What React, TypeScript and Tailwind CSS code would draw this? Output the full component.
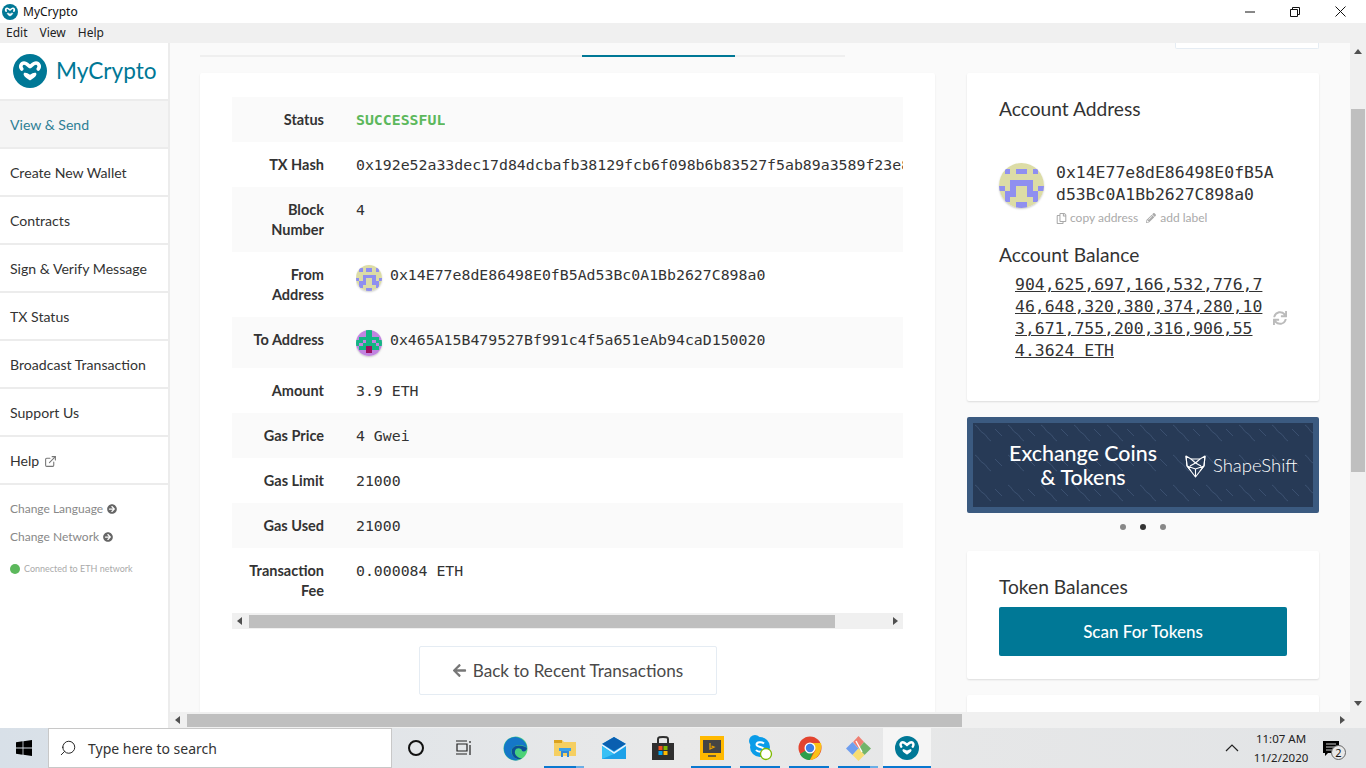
import { ExternalLink, Search } from "lucide-react";
import { FaArrowCircleRight, FaArrowLeft, FaPencilAlt, FaRegCopy, FaSync } from "react-icons/fa";

const lato = "font-['Lato','Noto_Sans',sans-serif]";
const mono = "font-['DejaVu_Sans_Mono',monospace]";

const navItems = ["Create New Wallet", "Contracts", "Sign & Verify Message", "TX Status", "Broadcast Transaction", "Support Us"];

function Logo({ size, className }: { size: number; className?: string }) {
  return (
    <svg width={size} height={size} viewBox="0 0 34 34" className={className}>
      <circle cx="17" cy="17" r="17" fill="#007896" />
      <path d="M8.8 15C6.5 12.5 8.5 9 11 9C13 9 15 11 17 12.6C19 11 21 9 23 9C25.5 9 27.5 12.5 25.2 15" fill="none" stroke="#fff" strokeWidth="3.6" strokeLinecap="round" strokeLinejoin="round" />
      <path d="M11.5 19.5C13.5 19 15.5 20.5 17 21.6C18.5 20.5 20.5 19 22.5 19.5C23.5 21 21 23 17 25.5C13 23 10.5 21 11.5 19.5Z" fill="#fff" stroke="#fff" strokeWidth="1.5" strokeLinejoin="round" />
    </svg>
  );
}

function Identicon({ size, bg, fg, spot, rows }: { size: number; bg: string; fg: string; spot?: string; rows: string[] }) {
  return (
    <svg width={size} height={size} viewBox="0 0 8 8" shapeRendering="crispEdges" className="shrink-0 rounded-full shadow-[0_1px_2px_rgba(0,0,0,0.2)]">
      <rect width="8" height="8" fill={bg} />
      {rows.map((row, y) =>
        row.split("").map((c, x) =>
          c === "." ? null : <rect key={`${x}-${y}`} x={x} y={y} width="1" height="1" fill={c === "#" ? fg : spot} />
        )
      )}
    </svg>
  );
}

const fromRows = ["........", ".#.##.#.", "........", "..####..", "#.#..#.#", ".##..##.", ".#....#.", "...##..."];
const toRows = ["...##...", "...##...", ".######.", "##.##.##", "#.####.#", ".##xx##.", "...xx...", "........"];

function Triangle({ dir, className }: { dir: "up" | "down" | "left" | "right"; className?: string }) {
  const points = { up: "4,1 8,6 0,6", down: "0,2 8,2 4,7", left: "6,0 6,8 1,4", right: "2,0 2,8 7,4" }[dir];
  return (
    <svg width="8" height="8" viewBox="0 0 8 8" className={className}>
      <polygon points={points} fill="#505050" />
    </svg>
  );
}

function Sidebar() {
  return (
    <aside className={`w-[170px] shrink-0 border-r-2 border-[#ececec] bg-white ${lato}`}>
      <div className="flex h-[58px] items-center border-b-2 border-[#ececec] pl-[13px]">
        <Logo size={34} />
        <span className="ml-[9px] text-[22.6px] leading-none text-[#007896]">MyCrypto</span>
      </div>
      <div className="flex h-[48px] items-center border-b-2 border-[#ececec] bg-[#f5f5f5] pl-[10px] pt-[2px] text-[14.1px] text-[#2f7f96]">View &amp; Send</div>
      {navItems.map((item) => (
        <div key={item} className="flex h-[48px] items-center border-b-2 border-[#ececec] pl-[10px] pt-[2px] text-[14.1px] text-[#333]">{item}</div>
      ))}
      <div className="flex h-[48px] items-center gap-[5px] border-b-2 border-[#ececec] pl-[10px] pt-[2px] text-[14.1px] text-[#333]">
        Help <ExternalLink size={13} className="text-[#777]" />
      </div>
      <div className="mt-[5px] flex h-[28px] items-center gap-[4px] pl-[10px] pt-[10px] text-[12px] text-[#888]">
        Change Language <FaArrowCircleRight size={10} className="text-[#666]" />
      </div>
      <div className="mt-[3px] flex h-[28px] items-center gap-[4px] pl-[10px] pt-[4px] text-[12px] text-[#888]">
        Change Network <FaArrowCircleRight size={10} className="text-[#666]" />
      </div>
      <div className="mt-[10px] flex h-[20px] items-center gap-[4px] pl-[10px] text-[9px] text-[#aaa]">
        <span className="h-[10px] w-[10px] rounded-full bg-[#5cb85c]" />
        Connected to ETH network
      </div>
    </aside>
  );
}

function Row({ label, h, gray, children }: { label: string; h: number; gray?: boolean; children: React.ReactNode }) {
  return (
    <div className={`flex w-[671px] ${gray ? "bg-[#fafafa]" : "bg-white"}`} style={{ height: h }}>
      <div className={`ml-[15px] w-[77px] shrink-0 pt-[13px] text-right text-[14.5px] font-bold leading-[20px] text-[#333] ${lato}`}>{label}</div>
      <div className={`ml-[32px] flex items-start gap-[8px] overflow-hidden whitespace-nowrap pt-[13px] text-[14.85px] leading-[20px] text-[#333] ${mono}`}>{children}</div>
    </div>
  );
}

function TxCard() {
  return (
    <section className="h-[700px] w-[735px] shrink-0 rounded-t-[2px] bg-white px-[32px] pt-[24px] shadow-[0_1px_2px_rgba(0,0,0,0.08)]">
      <Row label="Status" h={45} gray>
        <span className="font-bold text-[#5cb85c]">SUCCESSFUL</span>
      </Row>
      <Row label="TX Hash" h={45}>0x192e52a33dec17d84dcbafb38129fcb6f098b6b83527f5ab89a3589f23e8a21c4</Row>
      <Row label="Block Number" h={65} gray>4</Row>
      <Row label="From Address" h={65}>
        <Identicon size={26} bg="#dcdca6" fg="#8f8ff0" rows={fromRows} />
        0x14E77e8dE86498E0fB5Ad53Bc0A1Bb2627C898a0
      </Row>
      <Row label="To Address" h={51} gray>
        <Identicon size={26} bg="#c184e0" fg="#12b683" spot="#9c1060" rows={toRows} />
        0x465A15B479527Bf991c4f5a651eAb94caD150020
      </Row>
      <Row label="Amount" h={45}>3.9 ETH</Row>
      <Row label="Gas Price" h={45} gray>4 Gwei</Row>
      <Row label="Gas Limit" h={45}>21000</Row>
      <Row label="Gas Used" h={45} gray>21000</Row>
      <Row label="Transaction Fee" h={65}>0.000084 ETH</Row>
      <div className="flex h-[16px] w-[671px] items-center bg-[#f0f0f0]">
        <Triangle dir="left" className="ml-[4px] w-[8px]" />
        <div className="ml-[5px] h-[13px] w-[586px] bg-[#bfbfbf]" />
        <Triangle dir="right" className="ml-auto mr-[4px]" />
      </div>
      <div className="mt-[17px] flex justify-center">
        <button className={`flex h-[49px] w-[298px] items-center justify-center gap-[6px] rounded-[2px] border border-[#e5ecf3] bg-white text-[17.15px] text-[#4a4a4a] ${lato}`}>
          <FaArrowLeft size={15} className="text-[#777]" />
          Back to Recent Transactions
        </button>
      </div>
    </section>
  );
}

function Card({ className, children }: { className?: string; children?: React.ReactNode }) {
  return <section className={`rounded-[2px] bg-white px-[32px] shadow-[0_1px_2px_rgba(0,0,0,0.12)] ${className ?? ""}`}>{children}</section>;
}

function FoxMark() {
  return (
    <svg width="21" height="23" viewBox="0 0 21 23" fill="none" stroke="#fff" strokeWidth="1.1" strokeLinejoin="round">
      <path d="M1 1L6 4H15L20 1L19 11L10.5 22L2 11Z" />
      <path d="M1 1L2 11L10.5 14L19 11L20 1M6 4L10.5 8L15 4M2 11L6 16M19 11L15 16M10.5 14V22M10.5 8L5 11M10.5 8L16 11" />
    </svg>
  );
}

function Aside() {
  return (
    <div className="flex w-[352px] shrink-0 flex-col">
      <Card className="h-[328px] pt-[25px]">
        <h2 className={`text-[19.2px] leading-[22px] text-[#333] ${lato}`}>Account Address</h2>
        <div className="mt-[43px] flex gap-[12px]">
          <Identicon size={45} bg="#dcdca6" fg="#8f8ff0" rows={fromRows} />
          <div className="-mr-[10px] w-[225px]">
            <p className={`-mt-[1px] break-all text-[16.45px] leading-[22px] text-[#333] ${mono}`}>0x14E77e8dE86498E0fB5Ad53Bc0A1Bb2627C898a0</p>
            <div className={`mt-[4px] flex items-center text-[12px] leading-[16px] text-[#aaa] ${lato}`}>
              <FaRegCopy size={11} className="mr-[3px]" />copy address
              <FaPencilAlt size={10} className="ml-[8px] mr-[4px]" />add label
            </div>
          </div>
        </div>
        <h2 className={`mt-[18px] text-[19.2px] leading-[22px] text-[#333] ${lato}`}>Account Balance</h2>
        <div className="mt-[8px] flex items-center">
          <p className={`ml-[16px] w-[250px] break-all text-[16.45px] leading-[22px] text-[#333] underline ${mono}`}>904,625,697,166,532,776,746,648,320,380,374,280,103,671,755,200,316,906,554.3624 ETH</p>
          <FaSync size={14} className="ml-[8px] text-[#bbb]" />
        </div>
      </Card>
      <div className={`relative mt-[16px] flex h-[96px] items-center overflow-hidden rounded-[2px] border-[6px] border-[#3b5a80] bg-[#273a56] ${lato}`}>
        <svg className="absolute inset-0 h-full w-full" aria-hidden="true">
          <defs>
            <pattern id="waves" width="33" height="30" patternUnits="userSpaceOnUse">
              <path d="M2 2C6 4 6 8 10 10C14 12 14 16 18 18" fill="none" stroke="#3b5070" strokeWidth="1" />
              <path d="M22 6L29 13" fill="none" stroke="#3b5070" strokeWidth="1" />
            </pattern>
          </defs>
          <rect width="100%" height="100%" fill="url(#waves)" />
        </svg>
        <div className="relative ml-[30px] w-[160px] text-center text-[21.4px] font-medium leading-[24px] text-white">Exchange Coins<br />&amp; Tokens</div>
        <div className="relative ml-[22px] mt-[2px] flex items-center gap-[7px]">
          <FoxMark />
          <span className="text-[18.5px] font-light text-white">ShapeShift</span>
        </div>
      </div>
      <div className="flex h-[28px] items-center justify-center gap-[14px]">
        <span className="h-[6px] w-[6px] rounded-full bg-[#888]" />
        <span className="h-[6px] w-[6px] rounded-full bg-[#333]" />
        <span className="h-[6px] w-[6px] rounded-full bg-[#888]" />
      </div>
      <Card className="mt-[10px] h-[128px] pt-[25px]">
        <h2 className={`text-[19.2px] leading-[22px] text-[#333] ${lato}`}>Token Balances</h2>
        <button className={`mt-[9px] h-[49px] w-[288px] rounded-[2px] bg-[#007896] text-[17px] font-medium text-white ${lato}`}>Scan For Tokens</button>
      </Card>
      <Card className="mt-[16px] h-[60px]" />
    </div>
  );
}

function Main() {
  return (
    <main className="min-w-0 flex-1 overflow-hidden bg-[#fafafa] pl-[30px]">
      <div className="flex h-[30px] w-[1119px] items-start justify-between">
        <div className="relative mt-[12px] h-[2px] w-[645px] bg-[#efefef]">
          <div className="absolute left-[382px] top-0 h-[2px] w-[153px] bg-[#007896]" />
        </div>
        <div className="h-[6px] w-[144px] rounded-b-[2px] border-x border-b border-[#e5ecf3] bg-white" />
      </div>
      <div className="flex w-[1119px] gap-[32px]">
        <TxCard />
        <Aside />
      </div>
    </main>
  );
}

function WinIcon() {
  return (
    <svg width="16" height="16" viewBox="0 0 16 16" fill="#000">
      <path d="M0 2.2L6.6 1.3V7.5H0ZM7.4 1.2L16 0V7.5H7.4ZM0 8.4H6.6V14.7L0 13.8ZM7.4 8.4H16V16L7.4 14.8Z" />
    </svg>
  );
}

function TaskIcon({ active, split, children }: { active?: boolean; split?: boolean; children: React.ReactNode }) {
  return (
    <div className="relative flex h-[40px] w-[49px] shrink-0 items-center justify-center">
      {children}
      {active && (
        <div className="absolute bottom-0 left-[4px] flex h-[2px] w-[40px]">
          <div className="flex-1 bg-[#0a78d0]" />
          {split && <div className="w-[8px] bg-[#6aaee6]" />}
        </div>
      )}
    </div>
  );
}

function Taskbar() {
  return (
    <footer className="flex h-[40px] shrink-0 items-center bg-gradient-to-r from-[#d8e0e8] via-[#e9e9e9] to-[#e2e4e6] font-['Noto_Sans',sans-serif] text-[#111]">
      <div className="flex w-[48px] justify-center"><WinIcon /></div>
      <div className="flex h-[40px] w-[344px] items-center border border-[#c8c8c8] bg-white pl-[10px]">
        <Search size={18} strokeWidth={1.3} className="-scale-x-100 text-[#222]" />
        <span className="ml-[11px] text-[14px] text-[#333]">Type here to search</span>
      </div>
      <div className="ml-[16px] h-[16px] w-[16px] rounded-full border-2 border-[#111]" />
      <svg width="18" height="16" viewBox="0 0 18 16" fill="none" stroke="#222" strokeWidth="1.2" className="ml-[31px]">
        <path d="M1 1H12M1 14H12M2 4H12V11H2ZM15 1V3M15 5V15" />
      </svg>
      <div className="ml-[18px] flex items-center">
        <TaskIcon>
          <svg width="25" height="25" viewBox="0 0 25 25">
            <defs>
              <linearGradient id="edgeA" x1="0" y1="0" x2="1" y2="1"><stop offset="0" stopColor="#30c7a0" /><stop offset="1" stopColor="#55d66c" /></linearGradient>
            </defs>
            <circle cx="12.5" cy="12.5" r="12" fill="url(#edgeA)" />
            <path d="M1 11C2 4 8 1 12 1C18 1 24 6 24 12C20 8 12 8 9 13C7 17 10 22 16 24C8 26 0 20 1 11Z" fill="#1577c8" />
            <path d="M9 13C12 8 20 9 24 12C24 15 21 16 19 15C19 12 13 11 12 15C11 19 15 22 19 22.5C15 25 7 21 9 13Z" fill="#0d4f96" />
          </svg>
        </TaskIcon>
        <TaskIcon active split>
          <svg width="22" height="20" viewBox="0 0 22 20">
            <path d="M0 2H8L10 4H22V18H0Z" fill="#f5cf62" />
            <path d="M0 2H8V5H0Z" fill="#dba21e" />
            <path d="M7 12H15V19H13V15H9V19H7Z" fill="#2f88d8" />
            <path d="M5 10H17V13H5Z" fill="#3ba0e8" />
          </svg>
        </TaskIcon>
        <TaskIcon>
          <svg width="24" height="22" viewBox="0 0 24 22">
            <path d="M0 7L12 0L24 7V22H0Z" fill="#1da1e8" />
            <path d="M0 7L12 0L24 7L12 14Z" fill="#0a5fb0" />
            <path d="M0 7L12 15L24 7V9L12 17L0 9Z" fill="#e6f4ff" />
            <path d="M0 9L12 17L0 22Z" fill="#38c0f5" />
          </svg>
        </TaskIcon>
        <TaskIcon>
          <svg width="24" height="24" viewBox="0 0 24 24">
            <path d="M1 7H23V24H1Z" fill="#2f2f2f" />
            <path d="M7 8V3C7 1 9 1 12 1C15 1 17 1 17 3V8" fill="none" stroke="#2f2f2f" strokeWidth="2" />
            <rect x="7.5" y="10" width="4" height="4" fill="#f25022" />
            <rect x="12.5" y="10" width="4" height="4" fill="#7fba00" />
            <rect x="7.5" y="15" width="4" height="4" fill="#00a4ef" />
            <rect x="12.5" y="15" width="4" height="4" fill="#ffb900" />
          </svg>
        </TaskIcon>
        <TaskIcon active>
          <svg width="24" height="24" viewBox="0 0 24 24">
            <rect width="24" height="24" fill="#ffb900" />
            <rect x="3" y="4" width="18" height="13" fill="#444" />
            <path d="M8 20H16" stroke="#444" strokeWidth="1.5" />
            <path d="M10 7V13L14 11L11.5 10" fill="none" stroke="#e8a000" strokeWidth="1.3" />
          </svg>
        </TaskIcon>
        <TaskIcon active>
          <svg width="24" height="26" viewBox="0 0 24 26">
            <circle cx="6" cy="6" r="6" fill="#0a9ce8" />
            <circle cx="11" cy="12" r="10" fill="#0a9ce8" />
            <path d="M15 8.5C13 6.5 7.5 7 7.5 9.5C7.5 12.5 15 11.5 15 14.5C15 17 9 17.5 7 15" fill="none" stroke="#fff" strokeWidth="2" />
            <circle cx="17" cy="19" r="5.5" fill="#fff" stroke="#7fba00" strokeWidth="1.3" />
          </svg>
        </TaskIcon>
        <TaskIcon active>
          <svg width="24" height="24" viewBox="0 0 24 24">
            <circle cx="12" cy="12" r="11.5" fill="#e3442f" />
            <path d="M12 12L2 18C4 22 8 24 12 24L16 14Z" fill="#2d9e4c" />
            <path d="M12 7H23C24 11 23 17 19 21C17 23 14 24 12 24L17.5 14Z" fill="#fbc116" />
            <circle cx="12" cy="12" r="5.5" fill="#fff" />
            <circle cx="12" cy="12" r="4.2" fill="#3f7fe6" />
          </svg>
        </TaskIcon>
        <TaskIcon active split>
          <svg width="25" height="25" viewBox="0 0 25 25">
            <path d="M12.5 0L18 6L12.5 12.5L7 6Z" fill="#ef7f72" />
            <path d="M18 6L25 12.5L18.5 19L12.5 12.5Z" fill="#72b46a" />
            <path d="M6.5 6L12.5 12.5L6.5 19L0 12.5Z" fill="#6f9eee" />
            <path d="M12.5 12.5L18.5 19L12.5 25L6.5 19Z" fill="#f7dd72" />
            <path d="M10 5L16 16" stroke="#fff" strokeWidth="1.4" />
          </svg>
        </TaskIcon>
        <div className="relative flex h-[40px] w-[48px] shrink-0 items-center justify-center bg-[#f5f5f5]">
          <Logo size={24} />
          <div className="absolute bottom-0 h-[2px] w-full bg-[#0a78d0]" />
        </div>
      </div>
      <svg width="14" height="8" viewBox="0 0 14 8" fill="none" stroke="#222" strokeWidth="1.2" className="ml-[294px]">
        <path d="M1 7L7 1L13 7" />
      </svg>
      <div className="ml-[10px] w-[64px] text-center text-[11.5px] leading-[19px] text-[#222]">
        <div>11:07 AM</div>
        <div>11/2/2020</div>
      </div>
      <div className="relative ml-[10px]">
        <svg width="16" height="16" viewBox="0 0 16 16"><path d="M0 1H16V13H5L2 16V13H0Z" fill="#000" /><path d="M3 4H13M3 7H13M3 10H10" stroke="#fff" strokeWidth="0.8" /></svg>
        <span className="absolute left-[8px] top-[5px] flex h-[15px] w-[15px] items-center justify-center rounded-full border border-[#666] bg-[#e8e8e8] text-[11px] leading-none">2</span>
      </div>
    </footer>
  );
}

export default function App() {
  return (
    <div className="flex h-[768px] w-[1366px] flex-col overflow-hidden bg-white">
      <header className="flex h-[23px] shrink-0 items-center bg-white pl-[2px] font-['Noto_Sans',sans-serif]">
        <Logo size={16} />
        <span className="ml-[5px] text-[12px] text-[#111]">MyCrypto</span>
        <div className="ml-auto flex items-center">
          <svg width="10" height="2" viewBox="0 0 10 2"><path d="M0 1H10" stroke="#111" /></svg>
          <svg width="10" height="10" viewBox="0 0 10 10" fill="none" stroke="#111" className="ml-[35px]"><path d="M0.5 2.5H7.5V9.5H0.5ZM2.5 2.5V0.5H9.5V7.5H7.5" /></svg>
          <svg width="11" height="11" viewBox="0 0 11 11" fill="none" stroke="#111" className="ml-[35px] mr-[20px]"><path d="M0.5 0.5L10.5 10.5M10.5 0.5L0.5 10.5" /></svg>
        </div>
      </header>
      <nav className="flex h-[20px] shrink-0 items-center gap-[12px] bg-[#f0f0f0] pl-[6px] font-['Noto_Sans',sans-serif] text-[12px] text-[#222]">
        <span>Edit</span>
        <span>View</span>
        <span>Help</span>
      </nav>
      <div className="flex min-h-0 flex-1">
        <Sidebar />
        <div className="flex min-w-0 flex-1 flex-col">
          <div className="flex min-h-0 flex-1">
            <Main />
            <div className="flex w-[16px] shrink-0 flex-col items-center bg-[#f0f0f0]">
              <Triangle dir="up" className="mt-[5px]" />
              <div className="mt-[53px] h-[363px] w-[14px] bg-[#bfbfbf]" />
              <Triangle dir="down" className="mb-[5px] mt-auto" />
            </div>
          </div>
          <div className="flex h-[16px] shrink-0 items-center bg-[#f0f0f0]">
            <Triangle dir="left" className="ml-[4px]" />
            <div className="ml-[5px] h-[13px] w-[775px] bg-[#bfbfbf]" />
            <Triangle dir="right" className="ml-auto mr-[20px]" />
          </div>
        </div>
      </div>
      <Taskbar />
    </div>
  );
}
